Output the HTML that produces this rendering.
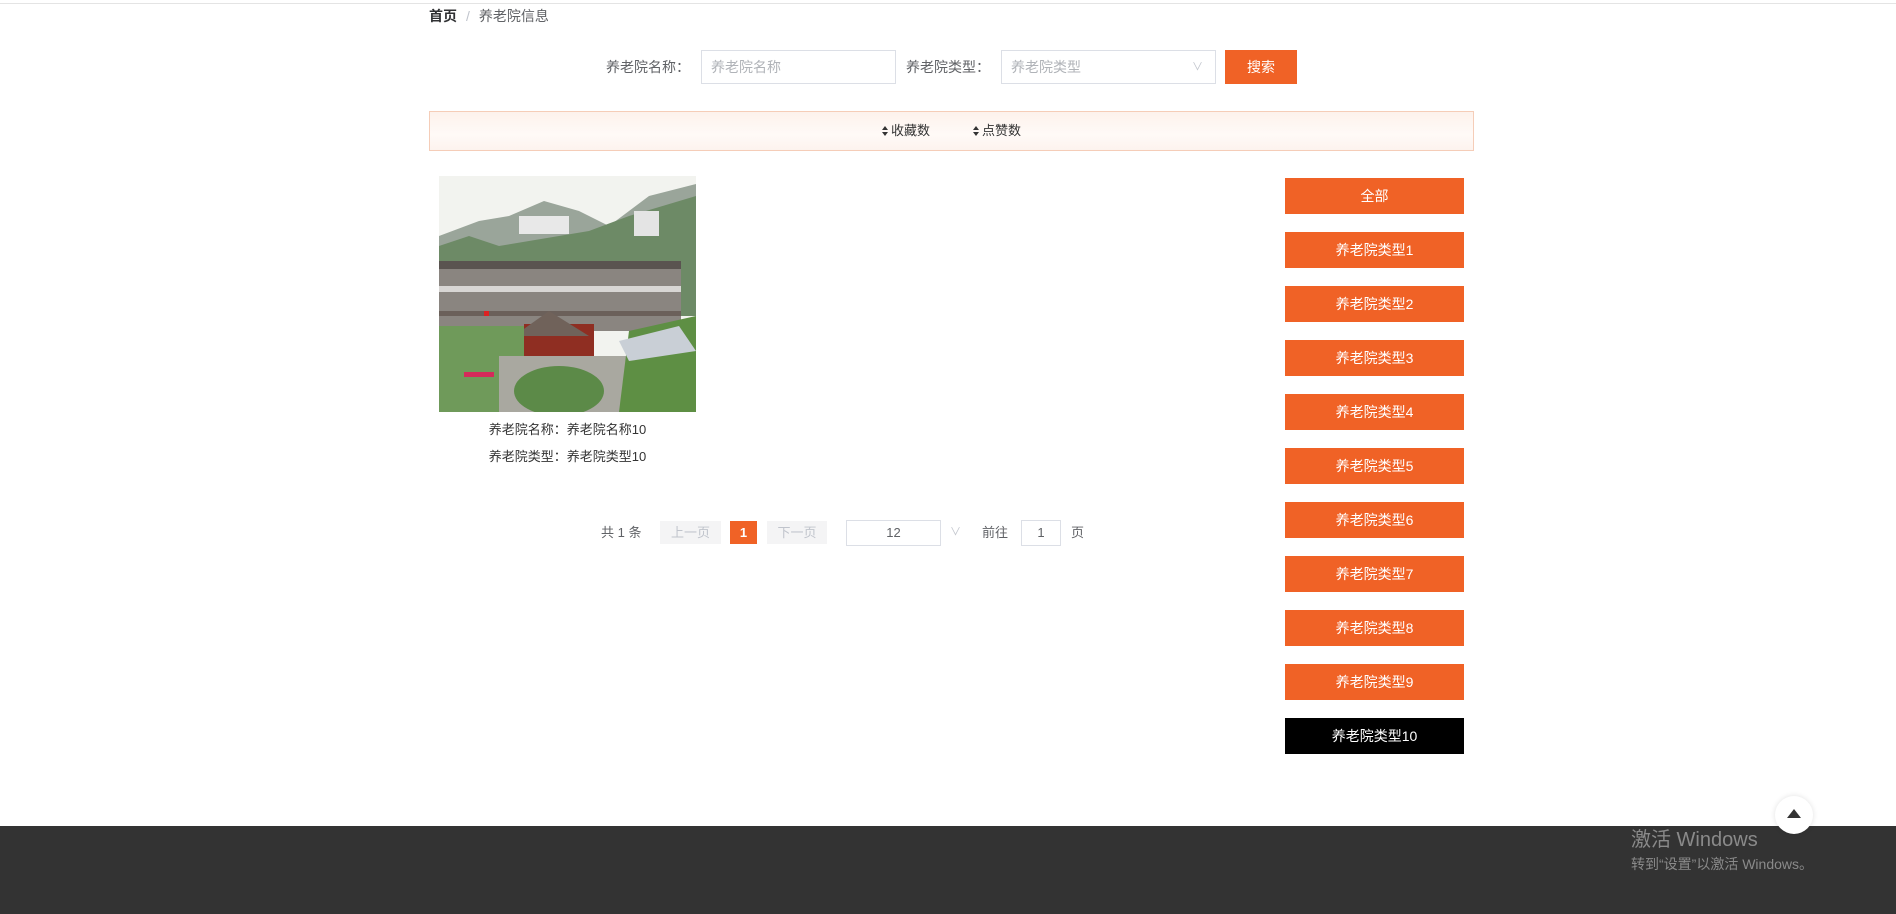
<!DOCTYPE html>
<html><head><meta charset="utf-8"><style>
*{margin:0;padding:0;box-sizing:border-box}
body{width:1896px;height:914px;position:relative;background:#fff;font-family:"Liberation Sans","Noto Sans CJK SC",sans-serif;font-size:14px;color:#606266;overflow:hidden}
.a{position:absolute}
.topline{left:0;top:3px;width:1896px;height:1px;background:#e4e4e4}
.inp{border:1px solid #dcdfe6;background:#fff;color:#b0b3b8;font-size:14px;line-height:32px;padding-left:9px}
.btn{background:#f06226;color:#fff;text-align:center}
.side{left:1285px;width:179px;height:36px;line-height:36px;background:#f06226;color:#fff;text-align:center;font-size:14px}
.pg{height:23px;line-height:23px;text-align:center;font-size:13px;background:#f4f4f5;color:#c0c4cc}
.si{display:inline-block;width:7px;height:10px;position:relative;margin-right:2px;vertical-align:-1px}
.si:before{content:"";position:absolute;left:0;top:0;border-left:3.5px solid transparent;border-right:3.5px solid transparent;border-bottom:4px solid #333}
.si:after{content:"";position:absolute;left:0;bottom:0;border-left:3.5px solid transparent;border-right:3.5px solid transparent;border-top:4px solid #333}
</style></head><body>
<div class="a topline"></div>
<div class="a" style="left:429px;top:7px;line-height:18px;font-size:14px"><b style="color:#303133">首页</b><span style="color:#c0c4cc;margin:0 9px">/</span><span style="color:#606266">养老院信息</span></div>

<div class="a" style="left:606px;top:57px;line-height:20px;color:#606266">养老院名称：</div>
<div class="a inp" style="left:701px;top:50px;width:195px;height:34px">养老院名称</div>
<div class="a" style="left:906px;top:57px;line-height:20px;color:#606266">养老院类型：</div>
<div class="a inp" style="left:1001px;top:50px;width:215px;height:34px">养老院类型<span style="position:absolute;right:12px;top:0;color:#c0c4cc;font-size:11px">&#8744;</span></div>
<div class="a btn" style="left:1225px;top:50px;width:72px;height:34px;line-height:34px">搜索</div>

<div class="a" style="left:429px;top:111px;width:1045px;height:40px;border:1px solid #f5cdb8;background:linear-gradient(#fdf2ec,#fffaf7 60%,#fdf3ee)"></div>
<div class="a" style="left:882px;top:121px;line-height:20px;color:#333;font-size:13px"><span class="si"></span>收藏数</div>
<div class="a" style="left:973px;top:121px;line-height:20px;color:#333;font-size:13px"><span class="si"></span>点赞数</div>

<svg class="a" style="left:439px;top:176px" width="257" height="236" viewBox="0 0 257 236">
<rect width="257" height="236" fill="#f2f3ef"/>
<path d="M0 60 L40 45 L70 40 L105 25 L140 35 L170 50 L210 20 L257 8 L257 130 L0 130Z" fill="#9aa59a"/>
<path d="M0 70 L30 60 L60 70 L90 65 L150 55 L190 40 L257 20 L257 140 L0 140Z" fill="#6d8a66"/>
<rect x="0" y="85" width="242" height="70" fill="#8a8580"/>
<rect x="0" y="85" width="242" height="8" fill="#5a5450"/>
<rect x="0" y="110" width="242" height="6" fill="#d8d6d4"/>
<rect x="0" y="135" width="242" height="5" fill="#6b605a"/>
<rect x="80" y="40" width="50" height="18" fill="#e8e8e8"/>
<rect x="195" y="35" width="25" height="25" fill="#e4e4e4"/>
<rect x="85" y="148" width="70" height="35" fill="#8f2e22"/>
<path d="M75 160 L110 135 L150 160Z" fill="#70625a"/>
<rect x="0" y="150" width="85" height="86" fill="#6f9a5a"/>
<rect x="60" y="180" width="140" height="56" fill="#a9a8a0"/>
<path d="M190 155 L257 140 L257 236 L180 236Z" fill="#5e8f44"/>
<path d="M180 165 L240 150 L257 175 L190 185Z" fill="#c9cfd6"/>
<ellipse cx="120" cy="215" rx="45" ry="25" fill="#5c8a48"/>
<rect x="45" y="135" width="5" height="5" fill="#d22"/>
<rect x="25" y="196" width="30" height="5" fill="#d42a5a"/>
</svg>
<div class="a" style="left:439px;top:420px;width:257px;text-align:center;line-height:20px;font-size:13px;color:#333">养老院名称：养老院名称10</div>
<div class="a" style="left:439px;top:447px;width:257px;text-align:center;line-height:20px;font-size:13px;color:#333">养老院类型：养老院类型10</div>

<div class="a" style="left:601px;top:523px;line-height:20px;font-size:13px;color:#606266">共 1 条</div>
<div class="a pg" style="left:660px;top:521px;width:61px">上一页</div>
<div class="a pg" style="left:730px;top:521px;width:27px;background:#f06226;color:#fff;font-weight:bold">1</div>
<div class="a pg" style="left:767px;top:521px;width:60px">下一页</div>
<div class="a" style="left:846px;top:520px;width:95px;height:26px;border:1px solid #dcdfe6;text-align:center;line-height:24px;font-size:13px;color:#606266">12</div>
<div class="a" style="left:950px;top:523px;font-size:11px;color:#c0c4cc">&#8744;</div>
<div class="a" style="left:982px;top:523px;line-height:20px;font-size:13px;color:#606266">前往</div>
<div class="a" style="left:1021px;top:520px;width:40px;height:26px;border:1px solid #dcdfe6;text-align:center;line-height:24px;font-size:13px;color:#606266">1</div>
<div class="a" style="left:1071px;top:523px;line-height:20px;font-size:13px;color:#606266">页</div>

<div class="a side" style="top:178px">全部</div>
<div class="a side" style="top:232px">养老院类型1</div>
<div class="a side" style="top:286px">养老院类型2</div>
<div class="a side" style="top:340px">养老院类型3</div>
<div class="a side" style="top:394px">养老院类型4</div>
<div class="a side" style="top:448px">养老院类型5</div>
<div class="a side" style="top:502px">养老院类型6</div>
<div class="a side" style="top:556px">养老院类型7</div>
<div class="a side" style="top:610px">养老院类型8</div>
<div class="a side" style="top:664px">养老院类型9</div>
<div class="a side" style="top:718px;background:#000">养老院类型10</div>

<div class="a" style="left:0;top:826px;width:1896px;height:88px;background:#333"></div>
<div class="a" style="left:1775px;top:796px;width:38px;height:38px;border-radius:50%;background:#fff;box-shadow:0 0 6px rgba(0,0,0,.12)"></div>
<div class="a" style="left:1787px;top:809px;width:0;height:0;border-left:7px solid transparent;border-right:7px solid transparent;border-bottom:9px solid #333"></div>
<div class="a" style="left:1631px;top:827px;font-size:20px;color:#8a8a8a;line-height:26px">激活 Windows</div>
<div class="a" style="left:1631px;top:854px;font-size:14px;color:#8a8a8a;line-height:20px">转到“设置”以激活 Windows。</div>
</body></html>
